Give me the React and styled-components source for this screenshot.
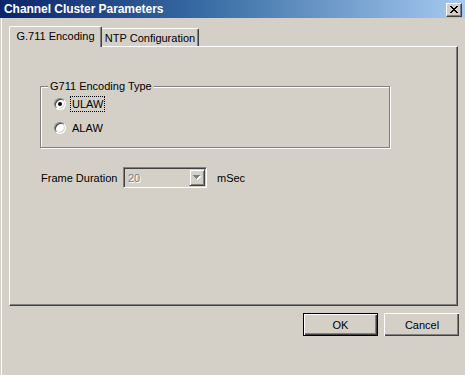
import React from "react";
import styled, { createGlobalStyle } from "styled-components";

const Global = createGlobalStyle`
  html, body { margin: 0; padding: 0; background: #d4d0c8; }
  body { font-family: "Liberation Sans", Arial, sans-serif; font-size: 11px; color: #000; }
  * { box-sizing: border-box; }
`;

const Window = styled.div`
  width: 465px;
  height: 375px;
  display: flex;
  flex-direction: column;
  background: #d4d0c8;
  overflow: hidden;
`;

const TitleBar = styled.div`
  height: 18px;
  flex: none;
  display: flex;
  align-items: center;
  justify-content: space-between;
  padding: 0 3px 0 4px;
  background: linear-gradient(to right, #0a246a 0%, #3a6ea5 45%, #a6caf0 100%);
`;

const Title = styled.span`
  color: #fff;
  font-weight: bold;
  font-size: 12px;
  letter-spacing: -0.05px;
  white-space: nowrap;
`;

const CloseButton = styled.div`
  width: 16px;
  height: 14px;
  margin-top: 1px;
  display: flex;
  align-items: center;
  justify-content: center;
  background: #d4d0c8;
  border-top: 1px solid #fff;
  border-left: 1px solid #fff;
  border-right: 1px solid #404040;
  border-bottom: 1px solid #404040;
  box-shadow: inset -1px -1px 0 #808080;
`;

const Client = styled.div`
  flex: 1;
  display: flex;
  flex-direction: column;
  margin-left: 1px;
  border-left: 1px solid #fff;
  padding: 8px 6px 0 7px;
`;

const TabRow = styled.div`
  display: flex;
  align-items: flex-end;
  height: 20px;
`;

const Tab = styled.div`
  position: relative;
  width: ${(p) => p.$w}px;
  height: ${(p) => (p.$active ? 21 : 18)}px;
  margin-bottom: ${(p) => (p.$active ? -1 : 0)}px;
  margin-left: ${(p) => (p.$active ? 0 : -1)}px;
  z-index: ${(p) => (p.$active ? 2 : 1)};
  display: flex;
  align-items: center;
  justify-content: center;
  padding-bottom: ${(p) => (p.$active ? 2 : 0)}px;
  background: #d4d0c8;
  border-top: 1px solid #fff;
  border-left: 1px solid #fff;
  border-right: 1px solid #404040;
  border-radius: 2px 2px 0 0;
  box-shadow: inset -1px 0 0 #808080;
  white-space: nowrap;
`;

const Panel = styled.div`
  width: 449px;
  height: 260px;
  display: flex;
  flex-direction: column;
  align-items: flex-start;
  padding: 39px 0 0 30px;
  border-top: 1px solid #fff;
  border-left: 1px solid #fff;
  border-right: 1px solid #404040;
  border-bottom: 1px solid #404040;
  box-shadow: inset -1px -1px 0 #808080;
`;

const GroupBox = styled.div`
  position: relative;
  width: 350px;
  height: 62px;
  display: flex;
  flex-direction: column;
  gap: 8px;
  padding: 9px 0 0 13px;
  border: 1px solid #808080;
  box-shadow: inset 1px 1px 0 #fff, 1px 1px 0 #fff;
`;

const Legend = styled.span`
  position: absolute;
  top: -8px;
  left: 7px;
  padding: 0 2px;
  line-height: 14px;
  background: #d4d0c8;
  white-space: nowrap;
`;

const RadioRow = styled.div`
  display: flex;
  align-items: center;
  height: 16px;
  gap: 5px;
`;

const RadioCircle = styled.span`
  position: relative;
  width: 12px;
  height: 12px;
  border-radius: 50%;
  background: #fff;
  border: 1px solid;
  border-color: #808080 #fff #fff #808080;
  box-shadow: inset 1px 1px 0 #404040, inset -1px -1px 0 #d4d0c8;
  &::after {
    content: "";
    display: ${(p) => (p.$checked ? "block" : "none")};
    position: absolute;
    left: 3px;
    top: 3px;
    width: 4px;
    height: 4px;
    border-radius: 50%;
    background: #000;
  }
`;

const RadioLabel = styled.span`
  padding: 0 1px;
  line-height: 14px;
  outline: ${(p) => (p.$focus ? "1px dotted #000" : "none")};
  outline-offset: 0;
`;

const FieldRow = styled.div`
  display: flex;
  align-items: center;
  margin-top: 19px;
  margin-left: 1px;
`;

const FieldLabel = styled.span`
  width: 82px;
  white-space: nowrap;
`;

const Combo = styled.div`
  width: 84px;
  height: 21px;
  display: flex;
  align-items: center;
  justify-content: space-between;
  padding: 0 0 0 3px;
  background: #d4d0c8;
  border-top: 1px solid #808080;
  border-left: 1px solid #808080;
  border-right: 1px solid #fff;
  border-bottom: 1px solid #fff;
  box-shadow: inset 1px 1px 0 #404040, inset -1px -1px 0 #d4d0c8;
`;

const ComboText = styled.span`
  color: #808080;
  text-shadow: 1px 1px 0 #fff;
  padding-left: 1px;
`;

const DropButton = styled.div`
  width: 16px;
  height: 17px;
  margin-right: 1px;
  display: flex;
  align-items: center;
  justify-content: center;
  background: #d4d0c8;
  border-top: 1px solid #d4d0c8;
  border-left: 1px solid #d4d0c8;
  border-right: 1px solid #404040;
  border-bottom: 1px solid #404040;
  box-shadow: inset 1px 1px 0 #fff, inset -1px -1px 0 #808080;
`;

const Unit = styled.span`
  margin-left: 10px;
`;

const ButtonRow = styled.div`
  display: flex;
  justify-content: flex-end;
  gap: 6px;
  margin-top: 7px;
`;

const Button = styled.div`
  width: 75px;
  height: 23px;
  display: flex;
  align-items: center;
  justify-content: center;
  background: #d4d0c8;
  border: 1px solid ${(p) => (p.$default ? "#000" : "transparent")};
  box-shadow: ${(p) =>
    p.$default
      ? "inset 1px 1px 0 #fff, inset -1px -1px 0 #404040, inset -2px -2px 0 #808080"
      : "inset 1px 1px 0 #fff, inset -1px -1px 0 #404040, inset -2px -2px 0 #808080"};
  ${(p) =>
    p.$default
      ? ""
      : "border: none; border-top: 1px solid #fff; border-left: 1px solid #fff; box-shadow: inset -1px -1px 0 #404040, inset -2px -2px 0 #808080;"}
`;

const CloseGlyph = () => (
  <svg width="8" height="7" viewBox="0 0 8 7" shapeRendering="crispEdges">
    <path
      d="M0 0h2v1h1v1h2V1h1V0h2v1H7v1H6v1H5v1h1v1h1v1h1v1H6V6H5V5H3v1H2v1H0V6h1V5h1V4h1V3H2V2H1V1H0z"
      fill="#000"
    />
  </svg>
);

const Arrow = () => (
  <svg width="8" height="5" viewBox="0 0 8 5" shapeRendering="crispEdges">
    <path d="M1 1h7L4.5 5z" fill="#fff" />
    <path d="M0 0h7L3.5 4z" fill="#808080" />
  </svg>
);

export default function App() {
  return (
    <>
      <Global />
      <Window>
        <TitleBar>
          <Title>Channel Cluster Parameters</Title>
          <CloseButton>
            <CloseGlyph />
          </CloseButton>
        </TitleBar>
        <Client>
          <TabRow>
            <Tab $active $w={93}>G.711 Encoding</Tab>
            <Tab $w={98}>NTP Configuration</Tab>
          </TabRow>
          <Panel>
            <GroupBox>
              <Legend>G711 Encoding Type</Legend>
              <RadioRow>
                <RadioCircle $checked />
                <RadioLabel $focus>ULAW</RadioLabel>
              </RadioRow>
              <RadioRow>
                <RadioCircle />
                <RadioLabel>ALAW</RadioLabel>
              </RadioRow>
            </GroupBox>
            <FieldRow>
              <FieldLabel>Frame Duration</FieldLabel>
              <Combo>
                <ComboText>20</ComboText>
                <DropButton>
                  <Arrow />
                </DropButton>
              </Combo>
              <Unit>mSec</Unit>
            </FieldRow>
          </Panel>
          <ButtonRow>
            <Button $default>OK</Button>
            <Button>Cancel</Button>
          </ButtonRow>
        </Client>
      </Window>
    </>
  );
}
